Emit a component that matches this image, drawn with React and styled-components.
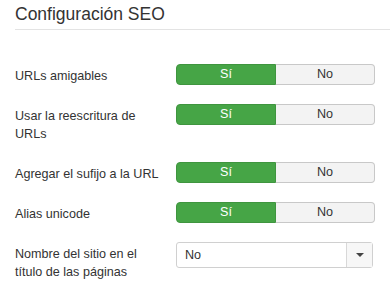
import React, { useState } from 'react'
import styled, { createGlobalStyle, css } from 'styled-components'

const GlobalStyle = createGlobalStyle`
  html, body {
    margin: 0;
    padding: 0;
    background: #fff;
  }
  body {
    font-family: 'Liberation Sans', Arial, Helvetica, sans-serif;
    font-size: 12.6px;
    line-height: 18px;
    color: #333;
  }
`

const fields = [
  { label: 'URLs amigables', type: 'toggle', value: true },
  { label: 'Usar la reescritura de URLs', type: 'toggle', value: true },
  { label: 'Agregar el sufijo a la URL', type: 'toggle', value: true },
  { label: 'Alias unicode', type: 'toggle', value: true },
  { label: 'Nombre del sitio en el título de las páginas', type: 'select', value: 'No' }
]

function Toggle({ initial }) {
  const [on, setOn] = useState(initial)
  return (
    <ToggleGroup>
      <ToggleButton type='button' active={on} onClick={() => setOn(true)}>
        Sí
      </ToggleButton>
      <ToggleButton type='button' active={!on} off onClick={() => setOn(false)}>
        No
      </ToggleButton>
    </ToggleGroup>
  )
}

function Select({ value }) {
  return (
    <SelectBox>
      <SelectValue>{value}</SelectValue>
      <SelectArrow>
        <Caret />
      </SelectArrow>
    </SelectBox>
  )
}

export default function App() {
  return (
    <>
      <GlobalStyle />
      <Panel>
        <Title>Configuración SEO</Title>
        <Form>
          {fields.map(field => (
            <Row key={field.label}>
              <Label>{field.label}</Label>
              <Controls>
                {field.type === 'toggle' ? (
                  <Toggle initial={field.value} />
                ) : (
                  <Select value={field.value} />
                )}
              </Controls>
            </Row>
          ))}
        </Form>
      </Panel>
    </>
  )
}

const Panel = styled.div`
  padding: 4px 0 0 15px;
`

const Title = styled.h2`
  margin: 0;
  padding-bottom: 5px;
  border-bottom: 1px solid #e3e3e3;
  font-size: 17.5px;
  font-weight: normal;
  line-height: 20px;
  color: #333;
`

const Form = styled.div`
  display: flex;
  flex-direction: column;
  gap: 19px;
  padding: 34px 15px 0 0;
`

const Row = styled.div`
  display: flex;
  align-items: flex-start;
`

const Label = styled.label`
  width: 150px;
  margin-right: 11px;
  padding-top: 3px;
  line-height: 18px;
  color: #333;
`

const Controls = styled.div`
  flex: 1;
`

const ToggleGroup = styled.div`
  display: flex;
  width: 199px;
  height: 21px;
`

const ToggleButton = styled.button`
  flex: 1;
  margin: 0;
  padding: 0;
  font-family: inherit;
  font-size: 12.6px;
  line-height: 19px;
  cursor: pointer;
  border: 1px solid #c8c8c8;
  background: #f3f3f3;
  color: #333;
  border-radius: ${({ off }) => (off ? '0 4px 4px 0' : '4px 0 0 4px')};
  ${({ off }) =>
    off &&
    css`
      border-left: none;
    `}
  ${({ active, off }) =>
    active &&
    !off &&
    css`
      background: #46a546;
      border-color: #3f953f;
      color: #fff;
    `}
`

const SelectBox = styled.div`
  display: flex;
  width: 197px;
  height: 26px;
  box-sizing: border-box;
  border: 1px solid #d0d0d0;
  border-radius: 3px;
  background: #fff;
`

const SelectValue = styled.span`
  flex: 1;
  padding-left: 8px;
  line-height: 24px;
  color: #333;
`

const SelectArrow = styled.span`
  display: flex;
  width: 25px;
  align-items: center;
  justify-content: center;
  border-left: 1px solid #d8d8d8;
  background: #f7f7f7;
`

const Caret = styled.span`
  width: 0;
  height: 0;
  border-left: 4px solid transparent;
  border-right: 4px solid transparent;
  border-top: 4px solid #444;
`
